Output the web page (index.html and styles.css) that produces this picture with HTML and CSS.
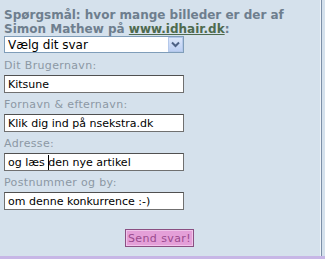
FILE: index.html
```html
<!DOCTYPE html>
<html lang="da">
<head>
  <meta charset="UTF-8" />
  <title>Konkurrence</title>
  <link rel="stylesheet" href="styles.css">
</head>
<body>
  <div class="panel">
    <form class="contest">
      <p class="question">Spørgsmål: hvor mange billeder er der af<br>Simon Mathew på <a href="#">www.idhair.dk</a>:</p>
      <div class="select-wrap">
        <select>
          <option>Vælg dit svar</option>
        </select>
        <span class="select-btn">
          <svg width="9" height="7" viewBox="0 0 9 7"><path d="M1 1.5 L4.5 5 L8 1.5" fill="none" stroke="#4d6185" stroke-width="2"/></svg>
        </span>
      </div>

      <label>Dit Brugernavn:</label>
      <input type="text" value="Kitsune">

      <label>Fornavn &amp; efternavn:</label>
      <input type="text" value="Klik dig ind på nsekstra.dk">

      <label>Adresse:</label>
      <div class="input-wrap">
        <input type="text" value="og læs den nye artikel">
        <span class="caret"></span>
      </div>

      <label>Postnummer og by:</label>
      <input type="text" value="om denne konkurrence :-)">

      <div class="actions">
        <button type="button">Send svar!</button>
      </div>
    </form>
  </div>
  <div class="bottom-bar"></div>
</body>
</html>
```

FILE: styles.css
```css
body {
  margin: 0;
  background: #d5e1ec;
  font-family: 'DejaVu Sans', Verdana, sans-serif;
  font-size: 11px;
  width: 325px;
  height: 259px;
  overflow: hidden;
}

.panel {
  width: 321px;
  height: 256px;
  background: #d5e1ec;
  border-right: 1px solid #7d90a8;
  box-shadow: inset -1px 0 0 #eef3f8;
}

.contest {
  padding: 8px 0 0 4px;
}

.question {
  margin: 0;
  font-size: 12px;
  font-weight: bold;
  color: #6e7e8e;
  line-height: 14px;
}

.question a {
  color: #4e6a4e;
}

.select-wrap {
  position: relative;
  width: 180px;
  height: 17px;
  margin-bottom: 5px;
}

select {
  appearance: none;
  -webkit-appearance: none;
  width: 180px;
  height: 17px;
  padding: 0 0 0 3px;
  border: 1px solid #7f9db9;
  border-radius: 0;
  background: #fff;
  font-family: 'DejaVu Sans', Verdana, sans-serif;
  font-size: 12px;
  color: #000;
}

.select-btn {
  position: absolute;
  right: 1px;
  top: 1px;
  width: 15px;
  height: 15px;
  box-sizing: border-box;
  border: 1px solid #b4c8ea;
  background: linear-gradient(#dce6fa, #bccff3);
  display: flex;
  align-items: center;
  justify-content: center;
}

label {
  display: block;
  color: #8c98a4;
  line-height: 15px;
  margin-bottom: 2px;
  letter-spacing: 0.35px;
}

input[type="text"] {
  display: block;
  box-sizing: border-box;
  width: 180px;
  height: 18px;
  margin: 0 0 4px;
  padding: 0 3px;
  border: 1px solid #707070;
  border-top-color: #505050;
  background: #fff;
  font-family: 'DejaVu Sans', Verdana, sans-serif;
  font-size: 11px;
  color: #000;
}

.input-wrap {
  position: relative;
}

.caret {
  position: absolute;
  left: 44px;
  top: 2px;
  width: 1px;
  height: 15px;
  background: #000;
}

.actions {
  width: 190px;
  display: flex;
  justify-content: flex-end;
  padding-top: 15px;
}

button {
  height: 18px;
  width: 69px;
  padding: 0;
  border: 1px solid #8a4f82;
  box-shadow: inset 0 0 0 1px #f0c4ea;
  background: #e49fd8;
  color: #9a4a8e;
  font-family: 'DejaVu Sans', Verdana, sans-serif;
  font-size: 11px;
  letter-spacing: 0.4px;
}

.bottom-bar {
  height: 3px;
  background: #c7b6e6;
}
```
